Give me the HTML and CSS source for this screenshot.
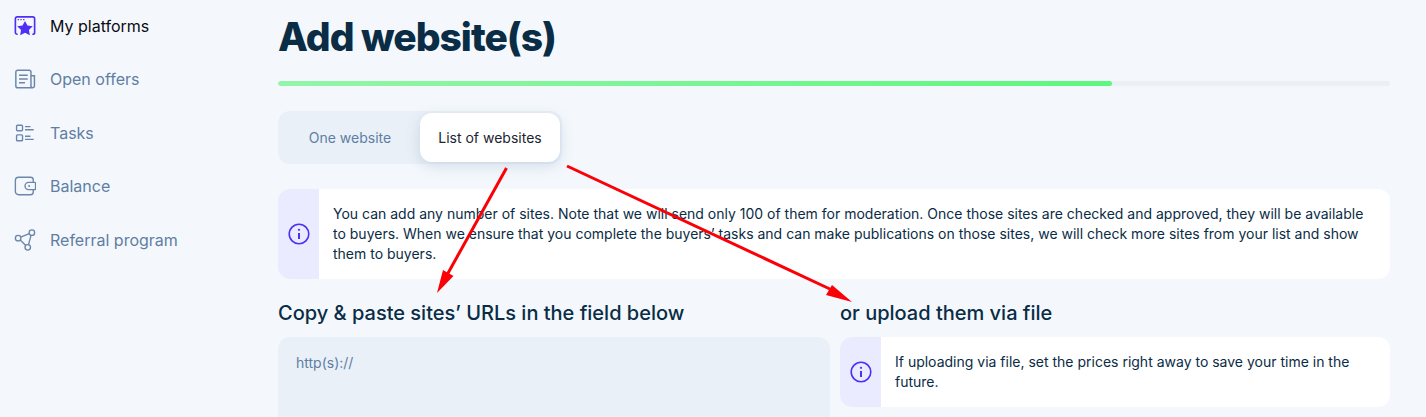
FILE: index.html
```html
<!DOCTYPE html>
<html lang="en">
<head>
<meta charset="utf-8">
<title>Add website(s)</title>
<link rel="stylesheet" href="styles.css">
</head>
<body>
<div class="page">
  <nav class="sidebar">
    <a class="nav-item active">
      <svg class="nav-icon" viewBox="0 0 24 24" fill="none"><path d="M4 21H3.500a2 2 0 0 1-2-2V4a2 2 0 0 1 2-2h17a2 2 0 0 1 2 2v15a2 2 0 0 1-2 2H20" stroke="#4f2ff5" stroke-width="1.800"/><path d="M4 5h1.400M7 5h1.400M10 5h1.400" stroke="#4f2ff5" stroke-width="1.200"/><path d="M12 6.500l2.700 5 5.800.9-4.200 4 1 5.600-5.300-2.700L6.700 22l1-5.600-4.200-4 5.800-.9z" fill="#4f2ff5"/></svg>
      <span>My platforms</span>
    </a>
    <a class="nav-item">
      <svg class="nav-icon" viewBox="0 0 24 24" fill="none" stroke="#6b86ab" stroke-width="1.600"><path d="M18.500 21.500H4a2 2 0 0 1-2-2V4.500a2 2 0 0 1 2-2h12.500a2 2 0 0 1 2 2v15a2 2 0 0 0 2 2 1.800 1.800 0 0 0 1.800-1.800V8.500h-4.300"/><path d="M5.500 8h9.500M5.500 12h9.500M5.500 16h6.500"/></svg>
      <span>Open offers</span>
    </a>
    <a class="nav-item">
      <svg class="nav-icon" viewBox="0 0 24 24" fill="none" stroke="#6b86ab" stroke-width="1.500"><rect x="2.800" y="3.500" width="6.500" height="6" rx="1"/><rect x="2.800" y="14" width="6.500" height="6.500" rx="1"/><path d="M12 5h6M12 8.500h9.500M12 15.500h6M12 19h9.500"/></svg>
      <span>Tasks</span>
    </a>
    <a class="nav-item">
      <svg class="nav-icon" viewBox="0 0 24 24" fill="none" stroke="#6b86ab" stroke-width="1.500"><path d="M21 8V5.500a3 3 0 0 0-3-3H5a3.500 3.500 0 0 0-3.500 3.500v12a3.500 3.500 0 0 0 3.500 3.500h13a3 3 0 0 0 3-3V16"/><path d="M16 8h6.500a1 1 0 0 1 1 1v6a1 1 0 0 1-1 1H16a4 4 0 0 1 0-8z"/><circle cx="16.500" cy="12" r="1.100" fill="#6b86ab" stroke="none"/></svg>
      <span>Balance</span>
    </a>
    <a class="nav-item">
      <svg class="nav-icon" viewBox="0 0 24 24" fill="none" stroke="#6b86ab" stroke-width="1.500"><circle cx="4.500" cy="10" r="3"/><circle cx="19.500" cy="4" r="3"/><circle cx="15" cy="20" r="3"/><path d="M7.200 8.800l9.500-3.700M6.800 12l6 6M18.600 6.900l-2.800 10.200"/></svg>
      <span>Referral program</span>
    </a>
  </nav>
  <main class="content">
    <h1 class="title">Add website(s)</h1>
    <div class="progress"><div class="progress-fill" style="width:75%"></div></div>
    <div class="tabs">
      <button class="tab">One website</button>
      <button class="tab tab-active">List of websites</button>
    </div>
    <section class="notice notice-wide">
      <div class="notice-icon">
        <svg class="info" viewBox="0 0 22 22" fill="none"><circle cx="11" cy="11" r="9.800" stroke="#4f2ff5" stroke-width="1.600"/><path d="M11 10v6" stroke="#4f2ff5" stroke-width="2"/><circle cx="11" cy="6.800" r="1.100" fill="#4f2ff5"/></svg>
      </div>
      <p class="notice-text">You can add any number of sites. Note that we will send only 100 of them for moderation. Once those sites are checked and approved, they will be available to buyers. When we ensure that you complete the buyers’ tasks and can make publications on those sites, we will check more sites from your list and show them to buyers.</p>
    </section>
    <div class="columns">
      <div class="column">
        <h2 class="subtitle">Copy &amp; paste sites’ URLs in the field below</h2>
        <textarea class="urls" placeholder="http(s)://"></textarea>
      </div>
      <div class="column">
        <h2 class="subtitle">or upload them via file</h2>
        <section class="notice">
          <div class="notice-icon">
            <svg class="info" viewBox="0 0 22 22" fill="none"><circle cx="11" cy="11" r="9.800" stroke="#4f2ff5" stroke-width="1.600"/><path d="M11 10v6" stroke="#4f2ff5" stroke-width="2"/><circle cx="11" cy="6.800" r="1.100" fill="#4f2ff5"/></svg>
          </div>
          <p class="notice-text">If uploading via file, set the prices right away to save your time in the future.</p>
        </section>
      </div>
    </div>
  </main>
</div>
<svg class="arrows" viewBox="0 0 1426 417" width="1426" height="417">
  <path d="M506.500 168L447 275" stroke="#fb0007" stroke-width="3" fill="none"/>
  <path d="M437 293L443 270L453.500 276z" fill="#fb0007"/>
  <path d="M567 166L832 290" stroke="#fb0007" stroke-width="3" fill="none"/>
  <path d="M852 302L826 295L832 285z" fill="#fb0007"/>
</svg>
</body>
</html>
```

FILE: styles.css
```css
* { box-sizing: border-box; }
html, body { margin: 0; height: 417px; overflow: hidden; }
body {
  position: relative;
  background: #f4f8fc;
  font-family: "Inter", "Liberation Sans", sans-serif;
  color: #0a2c45;
}
.page { display: flex; align-items: flex-start; padding-right: 36px; }
.sidebar { width: 278px; flex: none; margin-top: -1px; padding-left: 14px; display: flex; flex-direction: column; }
.nav-item {
  height: 53.5px;
  display: flex;
  align-items: center;
  gap: 14px;
  font-size: 16px;
  color: #607ea3;
}
.nav-item.active { color: #0b0b14; }
.nav-icon { width: 22px; height: 22px; flex: none; }
.content { flex: 1; min-width: 0; }
.title {
  margin: 0;
  height: 81px;
  padding-top: 12px;
  font-size: 39px;
  line-height: 50px;
  font-weight: 800;
  letter-spacing: -1px;
  color: #0a2c45;
}
.progress { height: 5px; border-radius: 3px; background: #ebf0f5; overflow: hidden; }
.progress-fill { height: 100%; border-radius: 3px; background: linear-gradient(90deg, #93f5a8, #5ef77f); }
.tabs {
  margin-top: 25px;
  width: 284px;
  height: 53px;
  padding: 2px;
  display: flex;
  border-radius: 12px;
  background: #e9f0f7;
}
.tab {
  width: 141px;
  border: 0;
  border-radius: 12px;
  background: transparent;
  font: 14px "Inter", "Liberation Sans", sans-serif;
  color: #607ea3;
  padding: 0;
}
.tab-active { background: #fff; color: #1c2530; box-shadow: 0 4px 14px rgba(90, 125, 170, 0.22); }
.notice {
  display: flex;
  min-height: 70px;
  border-radius: 12px;
  background: #fff;
  overflow: hidden;
}
.notice-wide { margin-top: 25px; }
.notice-icon {
  width: 41px;
  flex: none;
  display: flex;
  align-items: center;
  justify-content: center;
  background: #ebebff;
}
.info { width: 22px; height: 22px; }
.notice-text {
  margin: 0;
  padding: 15px 14px;
  font-size: 14px;
  line-height: 20px;
  color: #0a2c45;
}
.columns { margin-top: 20px; display: grid; grid-template-columns: 552px 550px; gap: 10px; }
.subtitle {
  margin: 0 0 9px;
  font-size: 20px;
  line-height: 29px;
  font-weight: 500;
  color: #0a2c45;
}
.urls {
  display: block;
  width: 100%;
  height: 200px;
  padding: 16px 18px;
  border: 0;
  border-radius: 12px;
  outline: 0;
  resize: none;
  background: #e9f0f7;
  font: 14px/20px "Inter", "Liberation Sans", sans-serif;
}
.urls::placeholder { color: #607ea3; opacity: 1; }
.arrows { position: absolute; left: 0; top: 0; pointer-events: none; }
```
